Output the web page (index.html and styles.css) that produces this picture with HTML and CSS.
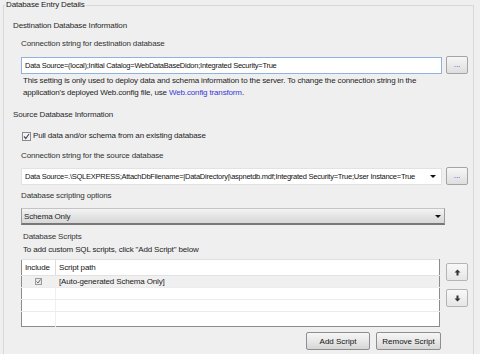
FILE: index.html
```html
<!DOCTYPE html>
<html lang="en">
<head>
  <meta charset="UTF-8">
  <title>Database Entry Details</title>
  <link rel="stylesheet" href="styles.css">
</head>
<body>
  <fieldset class="group">
    <legend>Database Entry Details</legend>

    <div class="section-title">Destination Database Information</div>
    <div class="sub">
      <div class="label">Connection string for destination database</div>
      <div class="field-row">
        <div class="text-box focused">Data Source=(local);Initial Catalog=WebDataBaseDidon;Integrated Security=True</div>
        <button class="dots">...</button>
      </div>
      <p class="help">This setting is only used to deploy data and schema information to the server. To change the connection string in the application's deployed Web.config file, use <a href="#">Web.config transform</a>.</p>
    </div>

    <div class="section-title">Source Database Information</div>
    <div class="sub">
      <div class="check-row">
        <svg class="check" width="9" height="9" viewBox="0 0 9 9">
          <rect x="0.5" y="0.5" width="8" height="8" fill="#f4f4f4" stroke="#8a8a8a"/>
          <path d="M2 4.5 L3.8 6.5 L7 2" fill="none" stroke="#4a4a6a" stroke-width="1.2"/>
        </svg>
        <span>Pull data and/or schema from an existing database</span>
      </div>
      <div class="label src-label">Connection string for the source database</div>
      <div class="field-row combo-row">
        <div class="text-box combo">
          <span class="combo-text">Data Source=.\SQLEXPRESS;AttachDbFilename=|DataDirectory|\aspnetdb.mdf;Integrated Security=True;User Instance=True</span>
          <span class="arrow"></span>
        </div>
        <button class="dots">...</button>
      </div>
      <div class="label opt-label">Database scripting options</div>
      <div class="select">
        <span>Schema Only</span>
        <span class="arrow"></span>
      </div>
      <div class="scripts-title">Database Scripts</div>
      <div class="scripts-hint">To add custom SQL scripts, click "Add Script" below</div>
      <div class="grid-row">
        <table class="scripts">
          <thead>
            <tr><th class="inc">Include</th><th>Script path</th></tr>
          </thead>
          <tbody>
            <tr class="sel">
              <td class="inc">
                <svg width="7" height="7" viewBox="0 0 7 7">
                  <rect x="0.5" y="0.5" width="6" height="6" fill="#eaeaea" stroke="#9a9a9a"/>
                  <path d="M1.5 3.5 L3 5 L5.5 1.5" fill="none" stroke="#6a6a8a" stroke-width="1"/>
                </svg>
              </td>
              <td>[Auto-generated Schema Only]</td>
            </tr>
            <tr><td class="inc"></td><td></td></tr>
            <tr><td class="inc"></td><td></td></tr>
            <tr class="last"><td class="inc"></td><td></td></tr>
          </tbody>
        </table>
        <div class="move">
          <button class="mv">
            <svg width="7" height="7" viewBox="0 0 7 7"><path d="M3.5 0.5 L6.5 3.5 L4.5 3.5 L4.5 6.5 L2.5 6.5 L2.5 3.5 L0.5 3.5 Z" fill="#333"/></svg>
          </button>
          <button class="mv down">
            <svg width="7" height="7" viewBox="0 0 7 7"><path d="M3.5 6.5 L6.5 3.5 L4.5 3.5 L4.5 0.5 L2.5 0.5 L2.5 3.5 L0.5 3.5 Z" fill="#333"/></svg>
          </button>
        </div>
      </div>
      <div class="actions">
        <button class="btn add">Add Script</button>
        <button class="btn remove">Remove Script</button>
      </div>
    </div>
  </fieldset>
</body>
</html>
```

FILE: styles.css
```css
body {
  margin: 0;
  padding: 0;
  background-color: #efefef;
  font-family: "Liberation Sans", Arial, sans-serif;
  font-size: 8px;
  letter-spacing: -0.15px;
  color: #1e1e1e;
  height: 354px;
  overflow: hidden;
}
.group {
  margin: 0 6px 0 3px;
  padding: 0 5px 0 9px;
  border: 1px solid #d8d8d8;
  border-bottom: none;
  height: 360px;
  min-width: 0;
}
.group legend {
  padding: 0 1px;
  margin-left: -8px;
  line-height: 10px;
  color: #222;
}
.section-title {
  line-height: 12px;
  margin-top: 10px;
  color: #2a2a2a;
}
.sub {
  margin-left: 8px;
  min-width: 0;
}
.label {
  line-height: 12px;
  margin-top: 6px;
  color: #333;
}
.field-row {
  display: flex;
  align-items: center;
  gap: 4px;
  margin-top: 6px;
  height: 18px;
}
.text-box {
  flex: 1;
  min-width: 0;
  height: 15px;
  line-height: 15px;
  padding: 0 3px;
  background: #fff;
  border: 1px solid #c9d4e0;
  white-space: nowrap;
  overflow: hidden;
  color: #111;
  font-size: 7.5px;
  letter-spacing: -0.25px;
}
.text-box.focused { border-color: #8fb3dd; }
.dots {
  flex: none;
  width: 22px;
  height: 18px;
  padding: 0;
  border: 1px solid #a4a4a4;
  border-radius: 2px;
  background: linear-gradient(#f6f6f6, #dedede);
  color: #2b3fc0;
  font: inherit;
  line-height: 10px;
}
.help {
  max-width: 400px;
  margin: 1px 0 0 2px;
  line-height: 12px;
  color: #1e1e1e;
}
.help a { color: #3a3ad0; text-decoration: none; }
.check-row {
  display: flex;
  align-items: center;
  gap: 2px;
  margin-top: 9px;
  line-height: 12px;
  padding-left: 1px;
}
.src-label { margin-top: 8px; }
.combo-row { margin-top: 5px; }
.combo {
  display: flex;
  align-items: center;
  border-color: #e2e2e2;
}
.combo-text {
  flex: 1;
  min-width: 0;
  overflow: hidden;
}
.arrow {
  flex: none;
  width: 0;
  height: 0;
  margin: 0 2px 0 4px;
  border-left: 3px solid transparent;
  border-right: 3px solid transparent;
  border-top: 3px solid #111;
}
.opt-label { margin-top: 5px; }
.select {
  display: flex;
  align-items: center;
  justify-content: space-between;
  width: 420px;
  height: 14px;
  margin-top: 6px;
  padding: 0 0 0 2px;
  border: 1px solid #9a9a9a;
  border-top-color: #c4c4c4;
  border-bottom: 2px solid #777;
  background: linear-gradient(#f4f4f4, #e4e4e4 50%, #d8d8d8);
}
.select .arrow { margin-right: 3px; }
.scripts-title {
  margin: 6px 0 0 2px;
  line-height: 12px;
  color: #333;
}
.scripts-hint {
  margin: 1px 0 0 2px;
  line-height: 12px;
}
.grid-row {
  display: flex;
  align-items: flex-start;
  gap: 6px;
  margin-top: 3px;
}
.scripts {
  width: 420px;
  height: 68px;
  border-collapse: collapse;
  background: #fff;
  border: 1px solid #8c8c8c;
  border-top-color: #e0e0e0;
}
.scripts th {
  height: 15px;
  text-align: left;
  font-weight: normal;
  padding: 0 3px;
  color: #111;
  border-bottom: 1px solid #e2e2e2;
}
.scripts th.inc {
  width: 27px;
  border-right: 1px solid #dcdcdc;
}
.scripts td {
  height: 11px;
  padding: 0 3px;
  border-bottom: 1px solid #ececec;
  color: #222;
}
.scripts td.inc {
  text-align: center;
  border-right: 1px solid #f0f0f0;
}
.scripts td svg { display: block; margin: 0 auto; }
.scripts tr.sel td { background: #f0f0f0; }
.scripts tr.last td { height: auto; border-bottom: none; }
.move {
  display: flex;
  flex-direction: column;
  gap: 8px;
  margin-top: 4px;
}
.mv {
  width: 22px;
  height: 18px;
  padding: 0;
  border: 1px solid #b4b4b4;
  border-radius: 2px;
  background: linear-gradient(#f8f8f8, #e6e6e6);
  display: flex;
  align-items: center;
  justify-content: center;
}
.actions {
  display: flex;
  gap: 6px;
  width: 420px;
  justify-content: flex-end;
  margin-top: 5px;
}
.btn {
  height: 18px;
  padding: 0;
  border: 1px solid #8e8e8e;
  border-radius: 2px;
  background: linear-gradient(#f6f6f6, #e8e8e8 50%, #d6d6d6);
  font: inherit;
  color: #111;
}
.btn.add { width: 64px; }
.btn.remove { width: 65px; }
```
